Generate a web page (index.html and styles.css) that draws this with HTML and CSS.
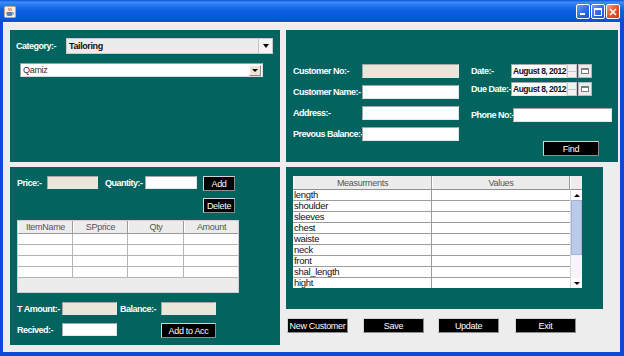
FILE: index.html
```html
<!DOCTYPE html>
<html>
<head>
<meta charset="utf-8">
<link rel="stylesheet" href="styles.css">
</head>
<body>
<div class="window">
  <div class="titlebar">
    <span class="app-icon">
      <svg width="12" height="12" viewBox="0 0 12 12">
        <rect x="0.5" y="0.5" width="11" height="11" rx="1" fill="#f4efe0" stroke="#b9a98a"/>
        <path d="M5 2 C4 3 6 3.5 5 5" stroke="#d0442a" fill="none" stroke-width="0.9"/>
        <path d="M7 2 C6 3 8 3.5 7 5" stroke="#d0442a" fill="none" stroke-width="0.9"/>
        <path d="M2.5 6 H8.5 V8 C8.5 9.5 7.5 10 5.5 10 C3.5 10 2.5 9.5 2.5 8 Z" fill="#5a7fb8"/>
        <path d="M8.5 6.5 C10 6.5 10 8.5 8.5 8.5" stroke="#5a7fb8" fill="none" stroke-width="0.9"/>
      </svg>
    </span>
    <div class="controls">
      <span class="ctl ctl-min"><i></i></span>
      <span class="ctl ctl-max"><i></i></span>
      <span class="ctl ctl-close">
        <svg width="8" height="8" viewBox="0 0 8 8"><path d="M1 1 L7 7 M7 1 L1 7" stroke="#fff" stroke-width="1.6"/></svg>
      </span>
    </div>
  </div>
  <div class="content">
    <div class="layout">
      <section class="panel p-cat">
        <div class="cat-row">
          <span class="lbl lbl-cat">Category:-</span>
          <div class="combo combo-main"><span class="combo-text">Tailoring</span><span class="combo-arrow"><i class="tri"></i></span></div>
        </div>
        <div class="combo combo-sub"><span class="combo-text">Qamiz</span><span class="combo-arrow"><i class="tri"></i></span></div>
      </section>

      <section class="panel p-cust">
        <div class="cust-left">
          <span class="lbl">Customer No:-</span><span class="field disabled"></span>
          <span class="lbl">Customer Name:-</span><span class="field"></span>
          <span class="lbl">Address:-</span><span class="field"></span>
          <span class="lbl">Prevous Balance:-</span><span class="field"></span>
        </div>
        <div class="cust-right">
          <div class="date-row">
            <span class="lbl lbl-date">Date:-</span>
            <div class="spinner"><span class="spin-text">August 8, 2012</span><span class="spin-btns"><i class="s-up"></i><i class="s-dn"></i></span><span class="cal"><i></i></span></div>
          </div>
          <div class="date-row due">
            <span class="lbl lbl-date">Due Date:-</span>
            <div class="spinner"><span class="spin-text">August 8, 2012</span><span class="spin-btns"><i class="s-up"></i><i class="s-dn"></i></span><span class="cal"><i></i></span></div>
          </div>
          <div class="phone-row">
            <span class="lbl lbl-phone">Phone No:-</span><span class="field f-phone"></span>
          </div>
          <button class="btn btn-find">Find</button>
        </div>
      </section>

      <section class="panel p-items">
        <div class="price-row">
          <span class="lbl lbl-price">Price:-</span><span class="field disabled f-price"></span>
          <span class="lbl lbl-qty">Quantity:-</span><span class="field f-qty"></span>
          <button class="btn btn-add">Add</button>
        </div>
        <button class="btn btn-add btn-del">Delete</button>
        <div class="itable">
          <div class="irow ihead"><span>ItemName</span><span>SPprice</span><span>Qty</span><span>Amount</span></div>
          <div class="irow"><span></span><span></span><span></span><span></span></div>
          <div class="irow"><span></span><span></span><span></span><span></span></div>
          <div class="irow"><span></span><span></span><span></span><span></span></div>
          <div class="irow"><span></span><span></span><span></span><span></span></div>
        </div>
        <div class="tot-row">
          <span class="lbl lbl-tot">T Amount:-</span><span class="field disabled f-tot"></span>
          <span class="lbl lbl-bal">Balance:-</span><span class="field disabled f-tot"></span>
        </div>
        <div class="tot-row rec-row">
          <span class="lbl lbl-tot">Recived:-</span><span class="field f-tot"></span>
          <button class="btn btn-acc">Add to Acc</button>
        </div>
      </section>

      <div class="right-bottom">
        <section class="panel p-meas">
          <div class="mtable">
            <div class="mhead"><span>Measurments</span><span>Values</span></div>
            <div class="mcorner"></div>
            <div class="mbody">
              <div class="mrow"><span>length</span><span></span></div>
              <div class="mrow"><span>shoulder</span><span></span></div>
              <div class="mrow"><span>sleeves</span><span></span></div>
              <div class="mrow"><span>chest</span><span></span></div>
              <div class="mrow"><span>waiste</span><span></span></div>
              <div class="mrow"><span>neck</span><span></span></div>
              <div class="mrow"><span>front</span><span></span></div>
              <div class="mrow"><span>shal_length</span><span></span></div>
              <div class="mrow"><span>hight</span><span></span></div>
            </div>
            <div class="scrollbar">
              <span class="sb-btn"><i class="sb-up"></i></span>
              <span class="sb-thumb"></span>
              <span class="sb-track"></span>
              <span class="sb-btn"><i class="sb-dn"></i></span>
            </div>
          </div>
        </section>
        <div class="actions">
          <button class="btn btn-act">New Customer</button>
          <button class="btn btn-act a-save">Save</button>
          <button class="btn btn-act a-upd">Update</button>
          <button class="btn btn-act a-exit">Exit</button>
        </div>
      </div>
    </div>
  </div>
</div>
</body>
</html>
```

FILE: styles.css
```css
* { box-sizing: border-box; }
html, body { margin: 0; padding: 0; }
body {
  width: 624px; height: 356px; overflow: hidden;
  background: #ffffff;
  font-family: "Liberation Sans", Arial, sans-serif;
}
.window {
  width: 624px; height: 356px;
  display: flex; flex-direction: column;
  background: #0a4ad6;
}
.titlebar {
  height: 22px; flex: none;
  display: flex; align-items: center; justify-content: space-between;
  padding: 0 4px 0 4px;
  background: linear-gradient(to bottom, #0a55dc 0%, #3f8ef6 10%, #2a79f0 22%, #0f60e4 45%, #0b58dc 75%, #0a4fd2 100%);
}
.app-icon { display: flex; width: 12px; height: 12px; margin-top: 1px; }
.controls { display: flex; gap: 1px; margin-top: 1px; }
.ctl {
  width: 14px; height: 15px; border: 1px solid #fff; border-radius: 2px;
  display: flex; align-items: center; justify-content: center;
  background: linear-gradient(135deg, #6c9cf8 0%, #2c66e4 60%, #1d52d2 100%);
  position: relative;
}
.ctl-min i { position: absolute; left: 3px; bottom: 3px; width: 5px; height: 2px; background: #fff; }
.ctl-max i { width: 8px; height: 8px; border: 1px solid #fff; border-top-width: 2px; }
.ctl-close { background: linear-gradient(135deg, #f0a38a 0%, #e2572e 50%, #c83c18 100%); }

.content {
  flex: 1;
  margin: 0 4px 4px 3px;
  background: #ededed;
  border-top: 1px solid #f8f8f8;
}
.layout {
  display: grid;
  grid-template-columns: 270px 332px;
  grid-template-rows: 132px auto;
  column-gap: 6px; row-gap: 5px;
  padding: 7px 0 0 7px;
  align-items: start;
}
.panel { background: #03645f; }
.p-cat, .p-cust { height: 132px; }

.lbl {
  color: #fff; font-weight: bold; font-size: 9px; letter-spacing: -0.5px;
  white-space: nowrap; display: flex; align-items: center;
}

/* top-left */
.p-cat { padding: 8px 0 0 6px; }
.cat-row { display: flex; align-items: center; height: 16px; }
.lbl-cat { width: 50px; }
.combo { display: flex; align-items: stretch; }
.combo-main {
  width: 207px; height: 16px; background: #ececec;
  border: 1px solid #c9c9c9;
}
.combo-main .combo-text { flex: 1; font-size: 9px; font-weight: bold; letter-spacing: -0.4px; padding-left: 2px; display: flex; align-items: center; color: #111; }
.combo-main .combo-arrow { width: 14px; border-left: 1px solid #c4c4c4; background: #f4f4f4; display: flex; align-items: center; justify-content: center; }
.tri { width: 0; height: 0; border-left: 3.5px solid transparent; border-right: 3.5px solid transparent; border-top: 4px solid #000; }
.combo-sub {
  width: 243px; height: 14px; margin: 9px 0 0 4px; background: #fff;
  border: 1px solid; border-color: #9d9d9d #dcdcdc #dcdcdc #9d9d9d;
}
.combo-sub .combo-text { flex: 1; font-size: 9px; letter-spacing: -0.3px; color: #333; padding-left: 2px; display: flex; align-items: center; }
.combo-sub .combo-arrow {
  width: 12px; margin: 1px 1px 0 0; height: 11px; background: #e9e4d6;
  border: 1px solid; border-color: #fff #8a8a8a #8a8a8a #fff;
  display: flex; align-items: center; justify-content: center;
}
.combo-sub .tri { border-left-width: 3px; border-right-width: 3px; border-top-width: 3px; }

/* fields */
.field {
  display: block; height: 14px; background: #fff;
  border: 1px solid; border-color: #a5a5a5 #e6e6e6 #e6e6e6 #a5a5a5;
}
.field.disabled { background: #ebe6da; }

/* top-right */
.p-cust { display: flex; padding: 34px 0 0 7px; }
.cust-left {
  display: grid; grid-template-columns: 69px 97px;
  grid-auto-rows: 14px; row-gap: 7px;
}
.cust-right { margin-left: 12px; display: flex; flex-direction: column; align-items: flex-start; }
.date-row { display: flex; height: 14px; }
.date-row.due { margin-top: 4px; }
.lbl-date { width: 40px; }
.spinner { display: flex; height: 14px; }
.spin-text {
  width: 56px; background: #fff; font-size: 8.5px; font-weight: bold; letter-spacing: -0.5px;
  color: #111; display: flex; align-items: center; padding-left: 1px; white-space: nowrap;
  border: 1px solid; border-color: #a5a5a5 #e6e6e6 #e6e6e6 #a5a5a5;
}
.spin-btns { width: 10px; display: flex; flex-direction: column; background: #f2f2f2; border: 1px solid #c8c8c8; }
.spin-btns i { flex: 1; display: block; }
.spin-btns .s-up { border-bottom: 1px solid #c8c8c8; }
.cal {
  width: 14px; margin-left: 1px; background: #ececec; border: 1px solid #b8b8b8;
  display: flex; align-items: center; justify-content: center;
}
.cal i { width: 8px; height: 6px; border: 1px solid #7c7c7c; background: #fff; border-top-width: 2px; }
.phone-row { display: flex; height: 14px; margin-top: 12px; }
.lbl-phone { width: 42px; }
.f-phone { width: 99px; }

.btn {
  display: flex; align-items: center; justify-content: center;
  background: #000; color: #fff;
  font-family: "Liberation Sans", Arial, sans-serif;
  font-size: 9px; letter-spacing: -0.3px; padding: 0; margin: 0;
  border: 1px solid; border-color: #d4d4d4 #8c8c8c #8c8c8c #d4d4d4;
  white-space: nowrap;
}
.btn-find { width: 56px; height: 15px; margin: 19px 0 0 72px; }

/* bottom-left */
.p-items { height: 178px; padding: 9px 0 0 7px; display: flex; flex-direction: column; align-items: flex-start; }
.price-row { display: flex; align-items: flex-start; }
.price-row .lbl, .price-row .field { height: 13px; }
.lbl-price { width: 30px; }
.f-price { width: 51px; }
.lbl-qty { width: 40px; margin-left: 7px; }
.f-qty { width: 52px; }
.btn-add { width: 32px; height: 15px; margin-left: 6px; }
.btn-del { margin: 7px 0 0 186px; }
.itable {
  margin-top: 7px; width: 222px; height: 73px; background: #ececec;
  border: 1px solid #d0d0d0;
}
.irow { display: grid; grid-template-columns: 55px 55px 56px 1fr; height: 11px; background: #fff; border-bottom: 1px solid #b4b4b4; }
.irow span { border-right: 1px solid #b4b4b4; }
.irow span:last-child { border-right: none; }
.ihead { height: 13px; background: #ececec; border-bottom: 1px solid #9a9a9a; }
.ihead span, .mhead span {
  font-size: 9px; letter-spacing: -0.3px; color: #555;
  display: flex; align-items: center; justify-content: center;
  border-right: 1px solid #9a9a9a; border-left: 1px solid #fff;
}
.tot-row { display: flex; align-items: flex-start; margin-top: 9px; }
.tot-row .lbl, .tot-row .field { height: 13px; }
.lbl-tot { width: 45px; }
.f-tot { width: 55px; }
.lbl-bal { width: 41px; margin-left: 3px; }
.rec-row { margin-top: 8px; }
.btn-acc { width: 55px; height: 15px; margin-left: 44px; }

/* bottom-right */
.right-bottom { display: flex; flex-direction: column; }
.p-meas { width: 317px; height: 142px; padding: 9px 0 0 7px; }
.mtable {
  display: grid; grid-template-columns: 277px 12px; grid-template-rows: 14px 98px;
  width: 289px; background: #fff;
}
.mhead { display: grid; grid-template-columns: 139px 138px; background: #ececec; border-bottom: 1px solid #8f8f8f; }
.mcorner { background: #ececec; border-bottom: 1px solid #8f8f8f; border-left: 1px solid #fff; }
.mbody { overflow: hidden; }
.mrow { display: grid; grid-template-columns: 139px 138px; height: 11px; border-bottom: 1px solid #9c9c9c; }
.mrow span { font-size: 9.5px; letter-spacing: -0.3px; color: #111; line-height: 10px; padding-left: 1px; white-space: nowrap; }
.mrow span:first-child { border-right: 1px solid #9c9c9c; }
.scrollbar { display: flex; flex-direction: column; background: #f3f3f3; border-left: 1px solid #d8d8d8; }
.sb-btn { height: 10px; display: flex; align-items: center; justify-content: center; background: #fff; }
.sb-up { width: 0; height: 0; border-left: 3px solid transparent; border-right: 3px solid transparent; border-bottom: 3px solid #000; }
.sb-dn { width: 0; height: 0; border-left: 3px solid transparent; border-right: 3px solid transparent; border-top: 3px solid #000; }
.sb-thumb { height: 55px; background: #b9cbe8; border: 1px solid #9fb4da; }
.sb-track { flex: 1; background: #f4f6fb; }

.actions { display: flex; margin: 9px 0 0 1px; }
.btn-act { width: 61px; height: 15px; }
.a-save { margin-left: 15px; }
.a-upd { margin-left: 14px; }
.a-exit { margin-left: 16px; }
```
